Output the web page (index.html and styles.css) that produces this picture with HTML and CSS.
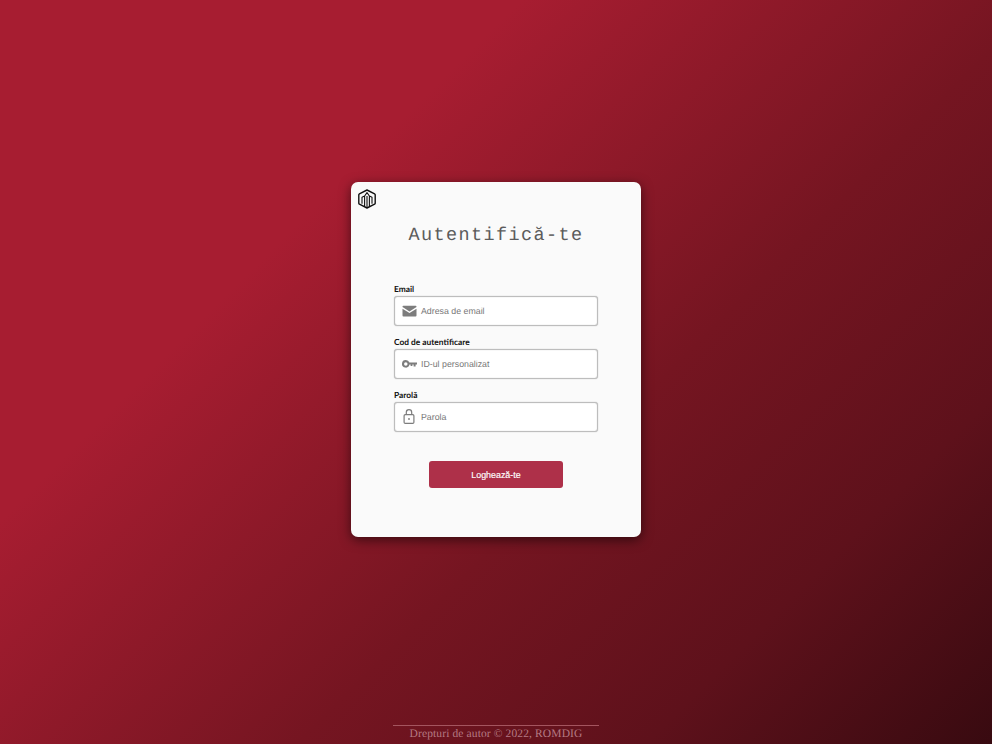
FILE: index.html
```html
<!DOCTYPE html>
<html lang="ro">
<head>
<meta charset="utf-8">
<title>Autentifică-te</title>
<link rel="stylesheet" href="styles.css">
</head>
<body>
<main class="page">
  <section class="card">
    <svg class="logo" width="18" height="20" viewBox="0 0 18 20" fill="none" stroke="#111" stroke-width="1.4" stroke-linejoin="round">
      <path d="M9 1 16.6 4.8Q17.2 5.1 17.2 5.8V14.2Q17.2 14.9 16.6 15.2L9 19 1.4 15.2Q.8 14.9.8 14.2V5.8Q.8 5.1 1.4 4.8Z"/>
      <path d="M4 14.8V8.2L6.6 7V17.4M11.4 17.4V7L14 8.2V14.8M6.6 7 9 3.6 11.4 7M9 7V18" stroke-width="1.1"/>
    </svg>
    <h1 class="title">Autentifică-te</h1>
    <form class="form">
      <div class="field">
        <label class="label">Email</label>
        <div class="input">
          <svg class="icon" width="15" height="12" viewBox="0 0 15 12"><path fill="#7d7d7d" d="M1.4.8h12.2a.9.9 0 0 1 .9.9v.4L7.5 6.5.5 2.1v-.4a.9.9 0 0 1 .9-.9Zm-.9 2.9 7 4.4 7-4.4v6.8a.9.9 0 0 1-.9.9H1.4a.9.9 0 0 1-.9-.9Z"/></svg>
          <span class="placeholder">Adresa de email</span>
        </div>
      </div>
      <div class="field">
        <label class="label">Cod de autentificare</label>
        <div class="input">
          <svg class="icon" width="15" height="8" viewBox="0 0 15 8"><path fill="#7d7d7d" fill-rule="evenodd" d="M3.8 0a3.8 3.8 0 0 1 3.6 2.5H15V4.6H13.6V6.6H11.6V4.6H10.4V6H8.6V4.6H7.5A3.8 3.8 0 1 1 3.8 0Zm0 2.2a1.7 1.7 0 1 0 0 3.5 1.7 1.7 0 0 0 0-3.5Z"/></svg>
          <span class="placeholder">ID-ul personalizat</span>
        </div>
      </div>
      <div class="field">
        <label class="label">Parolă</label>
        <div class="input">
          <svg class="icon" width="15" height="15" viewBox="0 0 15 15" fill="none" stroke="#7d7d7d" stroke-width="1.2"><rect x="2.1" y="5.6" width="9.8" height="8.8" rx="1.2"/><path d="M4.3 5.6V3.4a2.7 2.7 0 0 1 5.4 0v2.2"/><circle cx="7" cy="10" r=".9" fill="#7d7d7d" stroke="none"/></svg>
          <span class="placeholder">Parola</span>
        </div>
      </div>
      <button class="button" type="button">Loghează-te</button>
    </form>
  </section>
</main>
<footer class="footer">
  <p class="copy">Drepturi de autor © 2022, ROMDIG</p>
</footer>
</body>
</html>
```
FILE: styles.css
```css
* { box-sizing: border-box; }
html, body { margin: 0; height: 100%; }
body {
  height: 744px;
  overflow: hidden;
  display: flex;
  flex-direction: column;
  align-items: center;
  text-rendering: geometricPrecision;
  background: linear-gradient(135deg, #a71d31 0%, #a71d31 30%, #751521 60%, #5e111b 80%, #380a10 100%);
}
.page {
  flex: 1;
  padding-top: 182px;
}
.card {
  width: 290px;
  height: 355px;
  padding: 7px 7px 0;
  background: #fafafa;
  border-radius: 7px;
  box-shadow: 0 3px 12px rgba(0, 0, 0, .55);
}
.logo { display: block; }
.title {
  margin: 15px 0 0;
  text-align: center;
  font: 400 18.5px/24px "Liberation Mono", monospace;
  letter-spacing: 1.4px;
  color: #5c5c5c;
}
.form {
  margin-top: 34px;
  padding-left: 36px;
}
.field { width: 204px; margin-bottom: 9px; }
.label {
  display: block;
  height: 14px;
  font: 700 8.4px/14px Lato, sans-serif;
  color: #111;
}
.input {
  display: flex;
  align-items: center;
  gap: 5px;
  height: 30px;
  padding: 0 0 1px 6px;
  background: #fff;
  border: 1px solid #bdbdbd;
  border-radius: 3px;
  box-shadow: 0 0 1px #aaa, inset 0 0 1px #bbb;
}
.icon { flex: none; margin-left: 1px; margin-right: -1px; }
.placeholder {
  font: 400 8.8px/12px "Liberation Sans", sans-serif;
  color: #777;
}
.button {
  display: block;
  width: 134px;
  height: 27px;
  margin: 29px 0 0 35px;
  background: #ae3049;
  border: 0;
  border-radius: 3px;
  color: #fff;
  font: 400 8.9px/27px "Liberation Sans", sans-serif;
  -webkit-text-stroke: .15px #fff;
}
.footer {
  width: 206px;
  height: 19px;
  border-top: 1px solid #a4555f;
}
.copy {
  margin: 0;
  text-align: center;
  font: 400 11.5px/16px "Liberation Serif", serif;
  letter-spacing: .12px;
  color: #b57a83;
}
```
